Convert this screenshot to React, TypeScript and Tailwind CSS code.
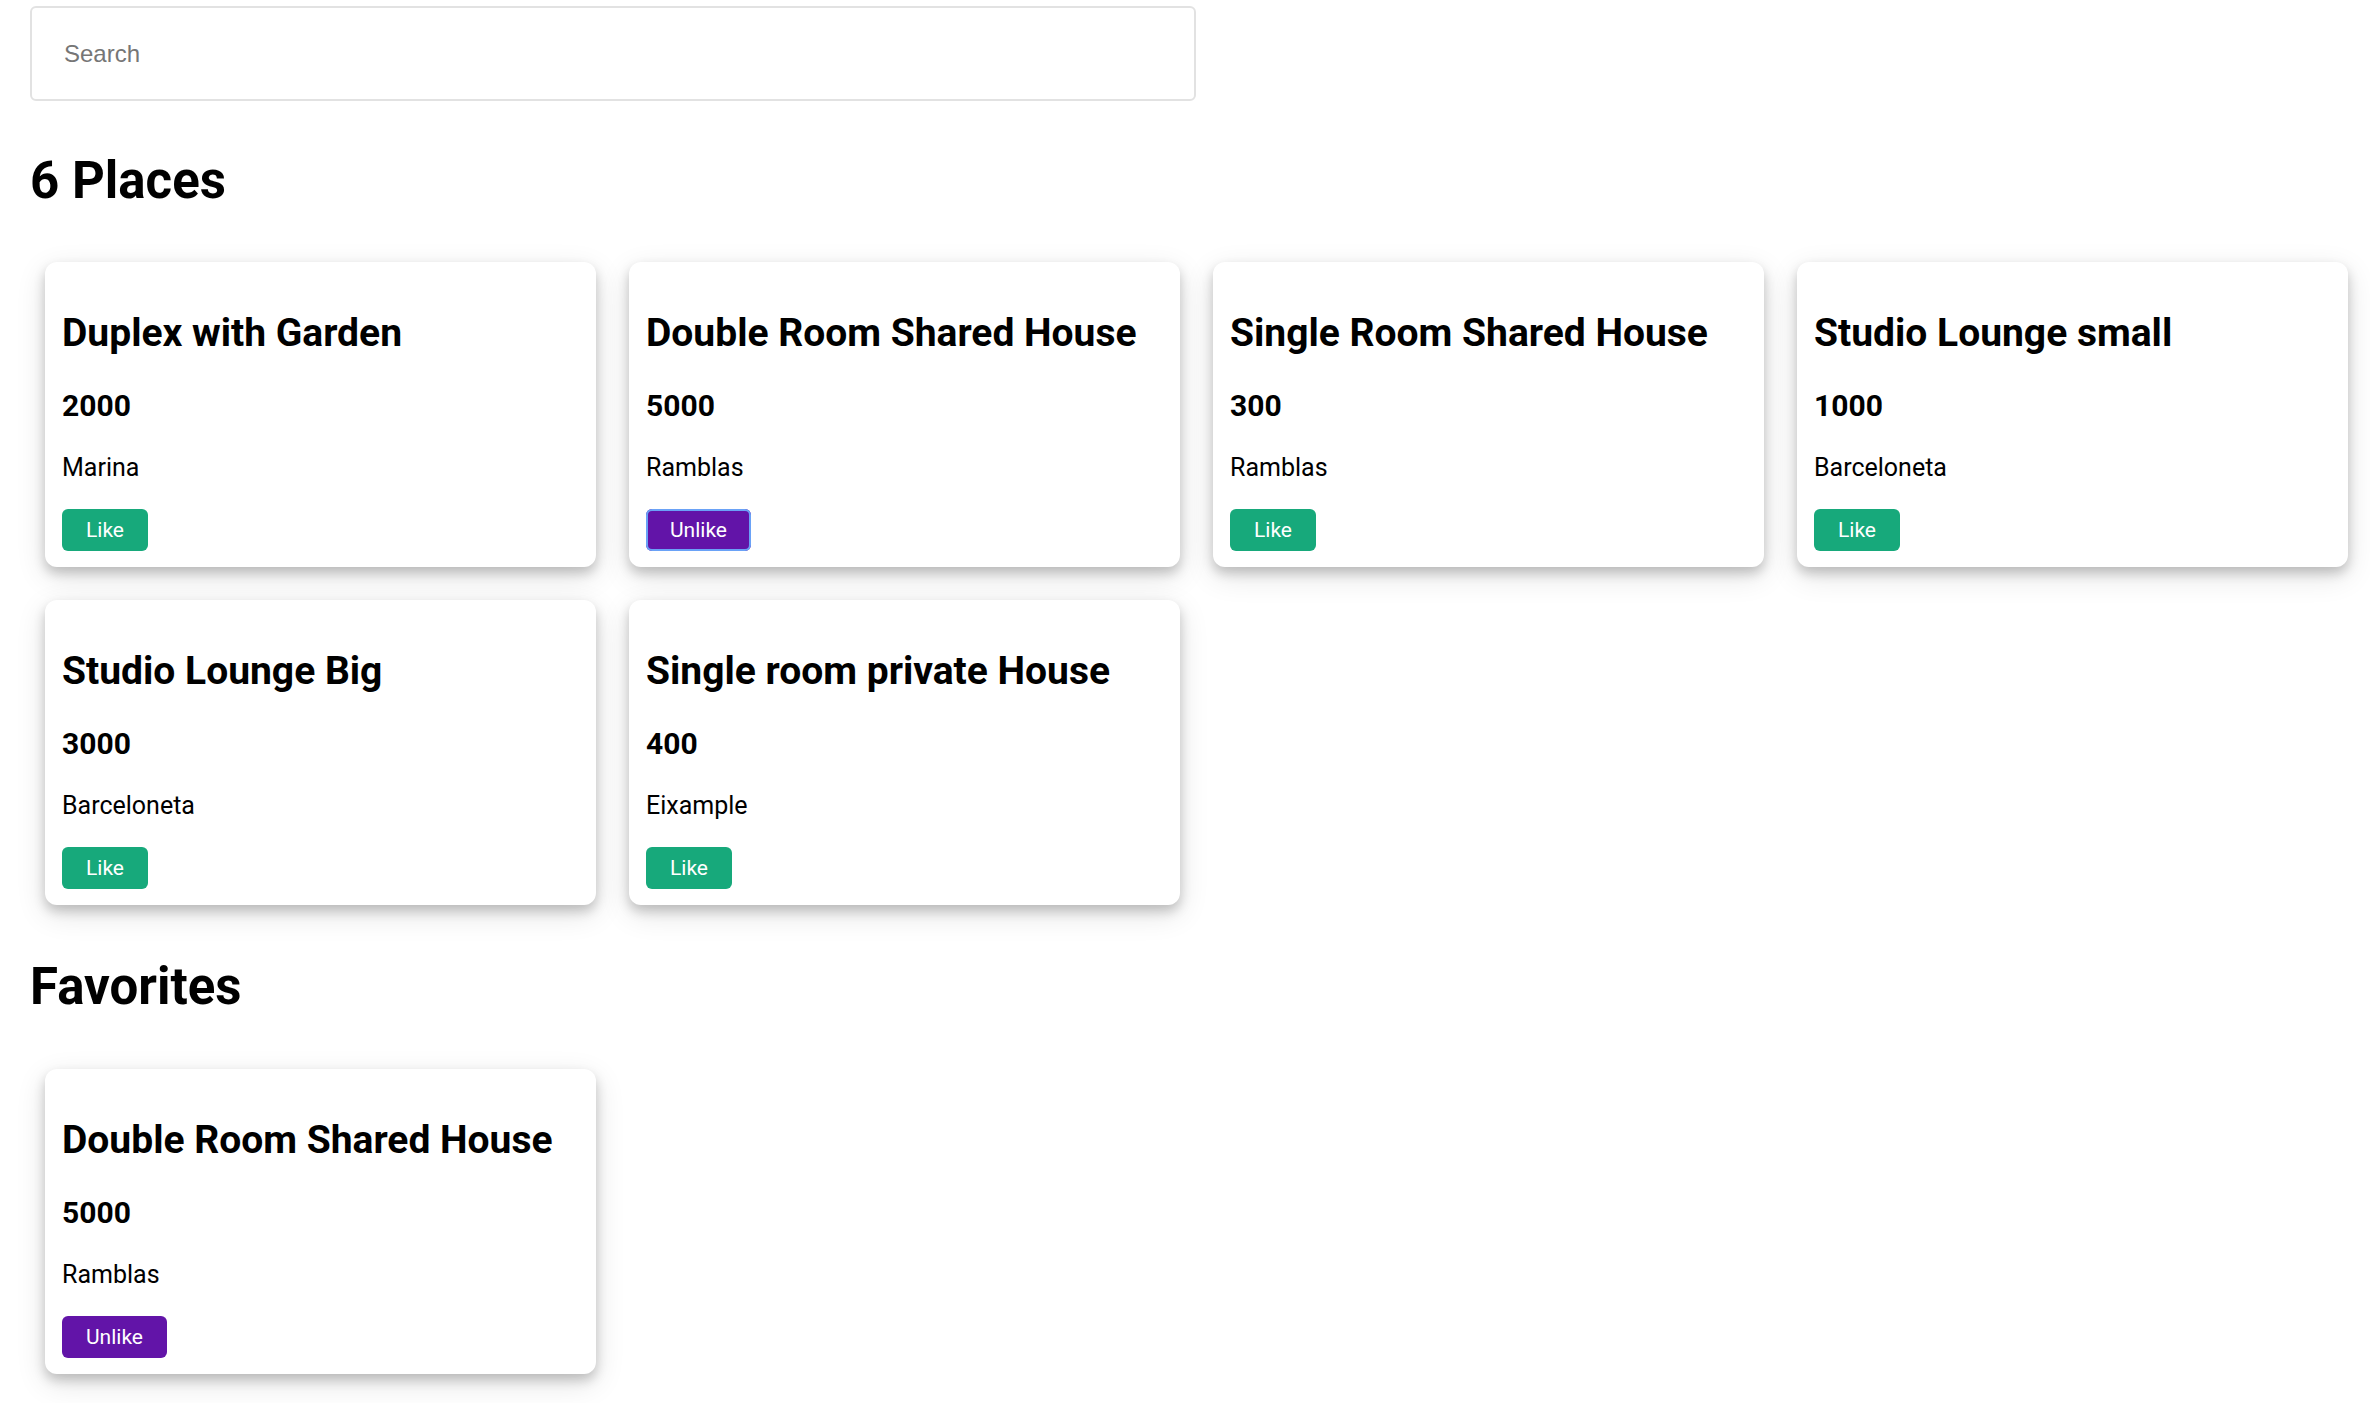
import { useState } from 'react'

type Place = {
  id: number
  title: string
  price: number
  location: string
}

const places: Place[] = [
  { id: 1, title: 'Duplex with Garden', price: 2000, location: 'Marina' },
  { id: 2, title: 'Double Room Shared House', price: 5000, location: 'Ramblas' },
  { id: 3, title: 'Single Room Shared House', price: 300, location: 'Ramblas' },
  { id: 4, title: 'Studio Lounge small', price: 1000, location: 'Barceloneta' },
  { id: 5, title: 'Studio Lounge Big', price: 3000, location: 'Barceloneta' },
  { id: 6, title: 'Single room private House', price: 400, location: 'Eixample' },
]

function PlaceCard({
  place,
  liked,
  focused,
  onToggle,
}: {
  place: Place
  liked: boolean
  focused?: boolean
  onToggle: () => void
}) {
  return (
    <div className="w-[551px] rounded-[12px] bg-white pt-[50px] pb-[16px] pl-[17px] pr-[17px] shadow-[0_6px_12px_rgba(0,0,0,0.2),0_9px_30px_rgba(0,0,0,0.12)]">
      <h3 className="text-[39px] leading-[42px] font-bold text-black">{place.title}</h3>
      <p className="mt-[34px] text-[30px] leading-[36px] font-bold text-black">{place.price}</p>
      <p className="mt-[30px] text-[25px] leading-[28px] text-black">{place.location}</p>
      <button
        onClick={onToggle}
        className={
          'mt-[27px] rounded-[6px] px-[24px] py-[9px] text-[21px] leading-[24px] text-white ' +
          (liked ? 'bg-[#6214a8] ' : 'bg-[#17a97b] ') +
          (focused ? 'ring-2 ring-inset ring-[#6aa2f7]' : '')
        }
      >
        {liked ? 'Unlike' : 'Like'}
      </button>
    </div>
  )
}

export default function App() {
  const [query, setQuery] = useState('')
  const [liked, setLiked] = useState<number[]>([2])
  const [focusedId, setFocusedId] = useState<number | null>(2)

  const toggle = (id: number) => {
    setFocusedId(id)
    setLiked((prev) => (prev.includes(id) ? prev.filter((x) => x !== id) : [...prev, id]))
  }

  const filtered = places.filter((p) => p.title.toLowerCase().includes(query.toLowerCase()))
  const favorites = places.filter((p) => liked.includes(p.id))

  return (
    <div className="min-h-screen bg-white pb-[40px] font-['Roboto',sans-serif] text-black">
      <div className="pl-[30px] pt-[6px]">
        <input
          value={query}
          onChange={(e) => setQuery(e.target.value)}
          placeholder="Search"
          className="h-[95px] w-[1166px] rounded-[6px] border-2 border-[#e2e2e2] pl-[32px] font-['Liberation_Sans',Arial,sans-serif] text-[24px] text-black placeholder:text-[#767676] outline-none"
        />
      </div>

      <h2 className="mt-[48px] pl-[30px] text-[51px] leading-[64px] font-bold">{filtered.length} Places</h2>

      <div className="mt-[49px] flex flex-wrap gap-[33px] pl-[45px]">
        {filtered.map((p) => (
          <PlaceCard
            key={p.id}
            place={p}
            liked={liked.includes(p.id)}
            focused={focusedId === p.id}
            onToggle={() => toggle(p.id)}
          />
        ))}
      </div>

      <h2 className="mt-[50px] pl-[30px] text-[51px] leading-[64px] font-bold">Favorites</h2>

      <div className="mt-[50px] flex flex-wrap gap-[33px] pl-[45px]">
        {favorites.map((p) => (
          <PlaceCard key={p.id} place={p} liked onToggle={() => toggle(p.id)} />
        ))}
      </div>
    </div>
  )
}
